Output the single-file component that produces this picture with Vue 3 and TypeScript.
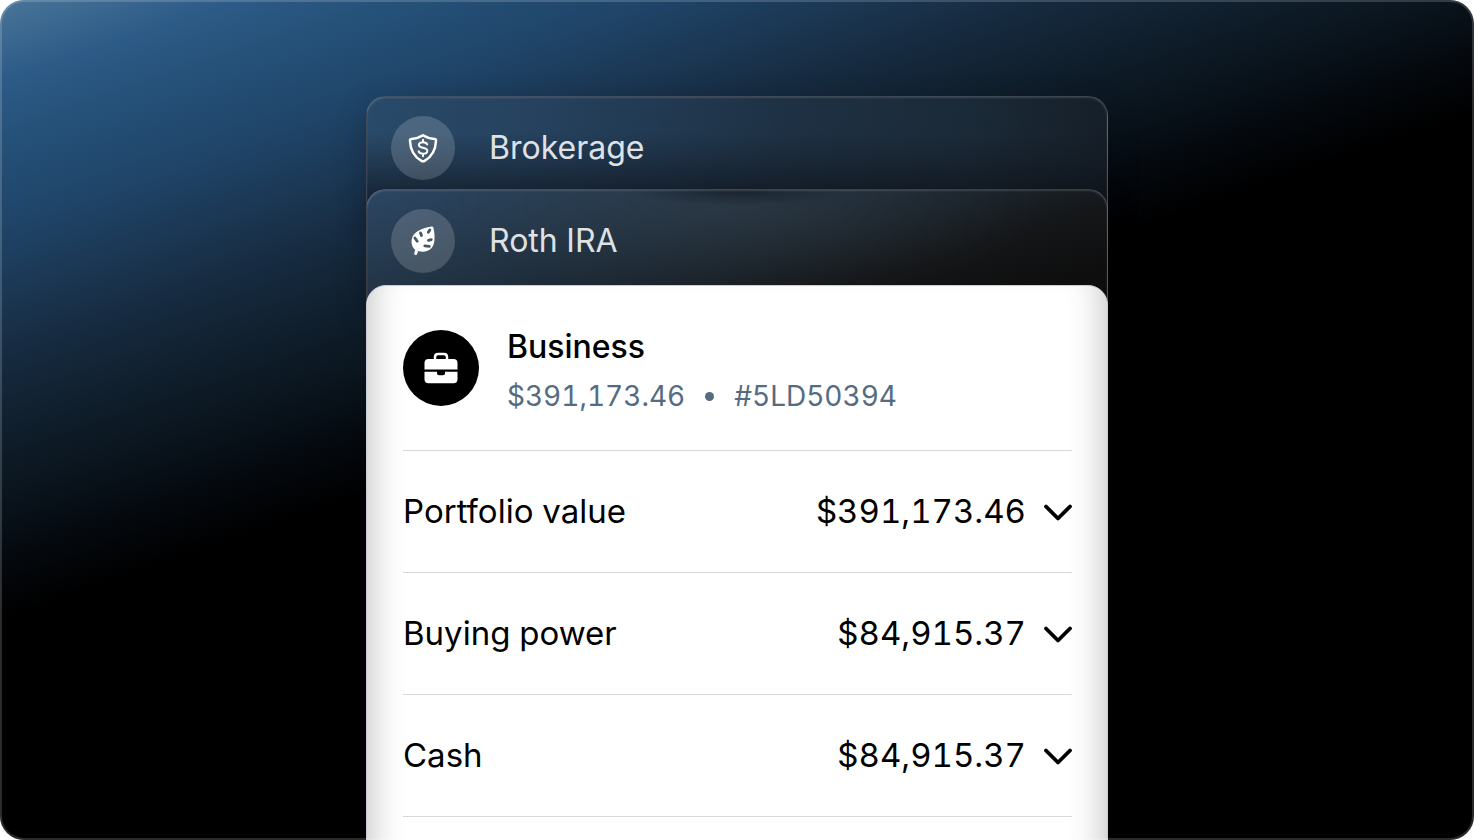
<script setup lang="ts">
import { ref } from 'vue'

interface Balance {
  id: string
  label: string
  amount: string
}

const balances: Balance[] = [
  { id: 'portfolio', label: 'Portfolio value', amount: '$391,173.46' },
  { id: 'buying', label: 'Buying power', amount: '$84,915.37' },
  { id: 'cash', label: 'Cash', amount: '$84,915.37' },
]

const selected = ref<string | null>(null)

function toggle(id: string): void {
  selected.value = selected.value === id ? null : id
}
</script>

<template>
  <main class="stage">
    <div class="stack">
      <section class="glass brokerage">
        <span class="badge">
          <svg width="32" height="32" viewBox="0 0 32 32" fill="none" stroke="#fff" stroke-linejoin="round" stroke-linecap="round" aria-hidden="true">
            <path d="M16 3.2 C12.6 5.4 8.4 6.6 4.2 6.9 C2.9 7 2.9 8 3 9 C3.4 17.6 7.6 25 14.4 28.9 Q16 29.8 17.6 28.9 C24.4 25 28.6 17.6 29 9 C29.1 8 29.1 7 27.8 6.9 C23.6 6.6 19.4 5.4 16 3.2 Z" stroke-width="2.5" />
            <path d="M20.2 12.400 C19.6 10.900 18 10.200 16 10.200 C13.600 10.200 11.900 11.200 11.900 13 C11.900 17 20.300 14.500 20.300 18.800 C20.300 20.600 18.400 21.800 16 21.800 C13.800 21.800 12.100 20.900 11.600 19.300 M16 7.800 V10.200 M16 21.800 V24.200" stroke-width="2" />
          </svg>
        </span>
        <h2 class="name">Brokerage</h2>
      </section>

      <section class="glass roth">
        <span class="badge">
          <svg width="32" height="32" viewBox="0 0 32 32" fill="none" aria-hidden="true">
            <path d="M24.5 1.500 C18 2.500 11.500 4.700 7.800 8.500 C4 12.400 3.400 18.500 6.600 23.200 L8.400 24.900 C13.800 27.600 20.500 27.200 24.400 23.300 C28.500 18.800 28 10 26.500 2.900 Q26.100 1.300 24.500 1.500 Z" fill="#fff" />
            <path d="M10 24.500 L8.700 28.500" stroke="#fff" stroke-width="3" stroke-linecap="round" />
            <g class="leaf-cuts" stroke-width="2.800" stroke-linecap="round">
              <path d="M7.900 13 L10.200 16.200" />
              <path d="M13.500 7.900 L14.500 10.500" />
              <path d="M22.800 4.900 L21.300 7.300" />
              <path d="M24.300 14.600 L21.500 15.300" />
              <path d="M22.300 21.300 L17.800 20.900" />
            </g>
          </svg>
        </span>
        <h2 class="name">Roth IRA</h2>
      </section>

      <section class="account">
        <header class="summary">
          <span class="avatar">
            <svg width="34" height="32" viewBox="0 0 34 32" aria-hidden="true">
              <path d="M11 8 V5 Q11 2 14 2 H20 Q23 2 23 5 V8" fill="none" stroke="#fff" stroke-width="2.500" />
              <path d="M4.500 7 H29.500 Q33.500 7 33.500 11 V17.500 H0.500 V11 Q0.500 7 4.500 7 Z" fill="#fff" />
              <path d="M0.500 19.700 H13 V21.200 Q13 23.200 15 23.200 H19 Q21 23.200 21 21.200 V19.700 H33.500 V27.200 Q33.500 31.200 29.500 31.200 H4.500 Q0.500 31.200 0.500 27.200 Z" fill="#fff" />
            </svg>
          </span>
          <div class="identity">
            <h1 class="title">Business</h1>
            <p class="details">
              <span>$391,173.46</span>
              <i class="dot"></i>
              <span>#5LD50394</span>
            </p>
          </div>
        </header>
        <button
          v-for="row in balances"
          :key="row.id"
          type="button"
          class="row"
          :aria-pressed="selected === row.id"
          @click="toggle(row.id)"
        >
          <span class="label">{{ row.label }}</span>
          <span class="amount">{{ row.amount }}</span>
          <svg class="chevron" width="30" height="20" viewBox="0 0 30 20" fill="none" stroke="#000" stroke-width="3.800" stroke-linecap="round" stroke-linejoin="round" aria-hidden="true">
            <path d="M4 5.500 L16 17.500 L28 5.500" />
          </svg>
        </button>
      </section>
    </div>
  </main>
</template>

<style>
body {
  background: #fff;
}
</style>

<style scoped>
.stage {
  box-sizing: border-box;
  position: relative;
  height: 100vh;
  overflow: hidden;
  padding: 96px 24px 0;
  border-radius: 24px;
  background: linear-gradient(161deg, #4a7599 0%, #2d5b87 6%, #26527a 10%, #1f4468 17%, #1b3753 22%, #172c42 26%, #112130 31%, #0a141d 37%, #050a10 41%, #000 46%);
  font-family: Inter, "Liberation Sans", sans-serif;
  font-variant-numeric: tabular-nums;
}

.stage::after {
  content: "";
  position: absolute;
  inset: 0;
  border: 2px solid rgba(255, 255, 255, 0.17);
  border-radius: 24px;
  pointer-events: none;
}

.stack {
  display: flex;
  flex-direction: column;
  max-width: 742px;
  margin: 0 auto;
}

.glass {
  box-sizing: border-box;
  display: flex;
  align-items: center;
  gap: 34px;
  height: 120px;
  padding: 0 24px 16px;
  border: 1px solid rgba(160, 175, 200, 0.3);
  border-radius: 20px 20px 0 0;
  box-shadow: inset 0 1px 2px rgba(255, 255, 255, 0.14), 0 8px 32px rgba(0, 0, 0, 0.2);
}

.brokerage {
  background:
    linear-gradient(180deg, rgba(14, 16, 22, 0) 30%, rgba(14, 16, 22, 0.6) 85%),
    linear-gradient(98deg, #294a69 0%, #26425f 22%, #21384f 42%, #1e3042 58%, #1b2a38 80%, #151e27 100%);
}

.roth {
  margin-top: -27px;
  background:
    radial-gradient(ellipse 110px 16px at 50% 0, rgba(8, 14, 22, 0.5), transparent),
    radial-gradient(ellipse 300px 90px at 50% 15%, rgba(60, 68, 76, 0.35), rgba(60, 68, 76, 0.16) 50%, transparent),
    linear-gradient(164deg, #2c4663 0%, #263b50 20%, #1f2e3c 40%, #1a2229 56%, #141618 70%, #0e0e0e 88%);
}

.badge {
  flex: none;
  display: grid;
  place-items: center;
  width: 64px;
  height: 64px;
  border-radius: 50%;
  background: rgba(255, 255, 255, 0.17);
}

.leaf-cuts {
  stroke: #475663;
}

.name,
.title {
  margin: 0;
  font-size: 32px;
  line-height: 40px;
}

.name {
  color: #dfe1e5;
  font-weight: 400;
}

.account {
  box-sizing: border-box;
  position: relative;
  margin: -24px 0 -96px;
  padding: 0 35px 96px 36px;
  border: 1px solid #c9ccd2;
  border-radius: 20px 20px 0 0;
  background: #fff;
  box-shadow: inset 0 -30px 36px rgba(0, 0, 0, 0.3);
}

.summary {
  display: flex;
  align-items: center;
  gap: 28px;
  height: 164px;
}

.avatar {
  flex: none;
  display: grid;
  place-items: center;
  width: 76px;
  height: 76px;
  border-radius: 50%;
  background: #000;
}

.identity {
  display: flex;
  flex-direction: column;
  gap: 12px;
  padding-top: 4px;
}

.title {
  color: #000;
  font-weight: 500;
}

.details {
  display: flex;
  align-items: center;
  gap: 20px;
  margin: 0;
  color: #556b82;
  font-size: 28px;
  line-height: 34px;
}

.dot {
  width: 9px;
  height: 9px;
  border-radius: 50%;
  background: #556b82;
}

.row {
  box-sizing: border-box;
  display: flex;
  align-items: center;
  width: 100%;
  height: 122px;
  padding: 0 0 2px;
  border: 0;
  border-top: 1px solid #d5d8dd;
  background: none;
  color: #000;
  font-family: inherit;
  font-size: 33px;
  font-variant-numeric: inherit;
  line-height: 40px;
  text-align: left;
  cursor: pointer;
}

.row:last-child {
  height: 123px;
  border-bottom: 1px solid #d5d8dd;
}

.label {
  flex: 1;
}

.chevron {
  margin-left: 16px;
}
</style>
